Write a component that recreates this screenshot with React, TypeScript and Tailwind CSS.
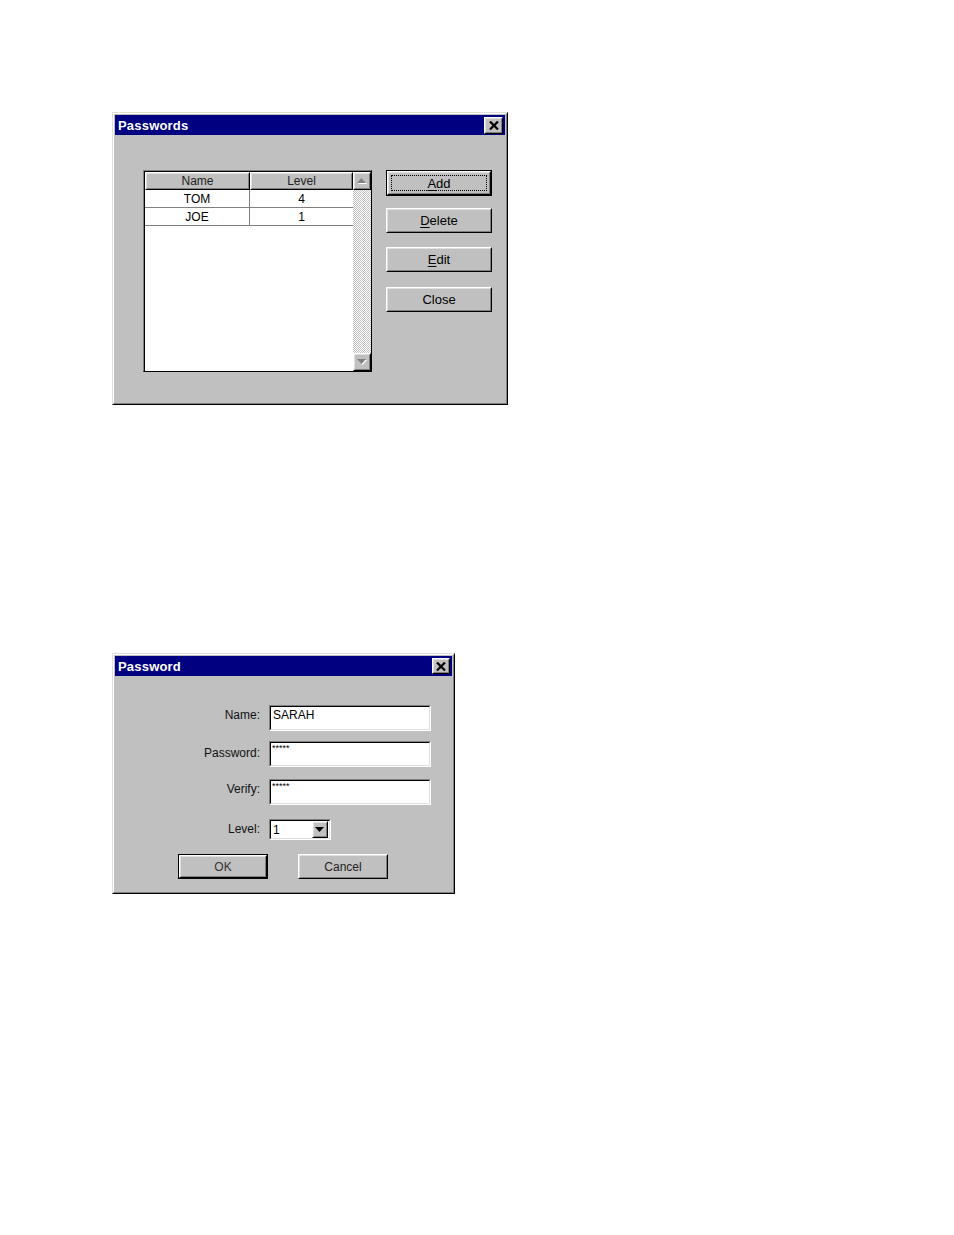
import type { ReactNode } from "react";

const font = "font-['Liberation_Sans',Arial,sans-serif]";

function Raised({
  className = "",
  innerClassName = "",
  children,
}: {
  className?: string;
  innerClassName?: string;
  children?: ReactNode;
}) {
  return (
    <div
      className={`border border-t-white border-l-white border-r-black border-b-black bg-[#c0c0c0] ${className}`}
    >
      <div
        className={`h-full w-full border border-t-[#dfdfdf] border-l-[#dfdfdf] border-r-[#808080] border-b-[#808080] ${innerClassName}`}
      >
        {children}
      </div>
    </div>
  );
}

function Sunken({
  className = "",
  innerClassName = "",
  children,
}: {
  className?: string;
  innerClassName?: string;
  children?: ReactNode;
}) {
  return (
    <div
      className={`border border-t-[#808080] border-l-[#808080] border-r-white border-b-white ${className}`}
    >
      <div
        className={`h-full w-full border border-t-black border-l-black border-r-[#dfdfdf] border-b-[#dfdfdf] bg-white ${innerClassName}`}
      >
        {children}
      </div>
    </div>
  );
}

function CloseButton({ className = "" }: { className?: string }) {
  return (
    <Raised className={className} innerClassName="flex items-center justify-center">
      <svg width="10" height="9" viewBox="0 0 10 9">
        <path d="M1 0.5 L9 8.5 M9 0.5 L1 8.5" stroke="black" strokeWidth={2.2} />
      </svg>
    </Raised>
  );
}

function TitleBar({ title, closeClass }: { title: string; closeClass: string }) {
  return (
    <div className="flex h-[20px] shrink-0 items-center justify-between bg-[#000080] pl-[3px] pr-[2px]">
      <span className="text-[13px] font-bold leading-none tracking-[0.2px] text-white">
        {title}
      </span>
      <CloseButton className={closeClass} />
    </div>
  );
}

function Window({
  title,
  className,
  closeClass,
  children,
}: {
  title: string;
  className: string;
  closeClass: string;
  children: ReactNode;
}) {
  return (
    <div
      className={`border border-t-[#dfdfdf] border-l-[#dfdfdf] border-r-black border-b-black ${className}`}
    >
      <div className="flex h-full flex-col border border-t-white border-l-white border-r-[#808080] border-b-[#808080] bg-[#c0c0c0] p-[1px]">
        <TitleBar title={title} closeClass={closeClass} />
        {children}
      </div>
    </div>
  );
}

function PushButton({
  children,
  isDefault,
  focused,
  className = "",
  textClass = "text-[13px]",
}: {
  children: ReactNode;
  isDefault?: boolean;
  focused?: boolean;
  className?: string;
  textClass?: string;
}) {
  const body = (
    <Raised
      className="h-full w-full"
      innerClassName={`flex items-center justify-center ${focused ? "p-[2px]" : ""}`}
    >
      {focused ? (
        <div className={`flex h-full w-full items-center justify-center border border-dotted border-black leading-none ${textClass}`}>
          {children}
        </div>
      ) : (
        <span className={`leading-none ${textClass}`}>{children}</span>
      )}
    </Raised>
  );
  if (isDefault) {
    return <div className={`border border-black ${className}`}>{body}</div>;
  }
  return <div className={className}>{body}</div>;
}

function Arrow({ dir, disabled }: { dir: "up" | "down"; disabled?: boolean }) {
  const pts = dir === "up" ? "4.5,0 9,5 0,5" : "0,0 9,0 4.5,5";
  return (
    <svg width="10" height="6" viewBox="0 0 10 6">
      {disabled && <polygon points={pts} fill="white" transform="translate(1,1)" />}
      <polygon points={pts} fill={disabled ? "#808080" : "black"} />
    </svg>
  );
}

const users = [
  { name: "TOM", level: 4 },
  { name: "JOE", level: 1 },
];

function UserList() {
  return (
    <div className="h-[202px] w-[229px] border border-t-[#808080] border-l-[#808080] border-r-black border-b-black">
      <div className="flex h-full border-t border-l border-t-black border-l-black bg-white">
        <div className="flex-1">
          <div className="flex h-[18px]">
            <Raised className="w-[105px]" innerClassName="flex items-center justify-center">
              <span className="text-[12px] leading-none text-[#222]">Name</span>
            </Raised>
            <Raised className="flex-1" innerClassName="flex items-center justify-center">
              <span className="text-[12px] leading-none text-[#222]">Level</span>
            </Raised>
          </div>
          {users.map((u) => (
            <div key={u.name} className="flex h-[18px] border-b border-[#808080]">
              <div className="flex w-[105px] items-center justify-center border-r border-[#808080] text-[12px] leading-none">
                {u.name}
              </div>
              <div className="flex flex-1 items-center justify-center text-[12px] leading-none">
                {u.level}
              </div>
            </div>
          ))}
        </div>
        <div className="flex w-[18px] flex-col">
          <Raised className="h-[18px] w-[18px]" innerClassName="flex items-center justify-center">
            <Arrow dir="up" disabled />
          </Raised>
          <div className="flex-1 bg-[image:repeating-conic-gradient(#c0c0c0_0_25%,#ffffff_0_50%)] bg-[length:2px_2px]" />
          <Raised className="h-[18px] w-[18px]" innerClassName="flex items-center justify-center">
            <Arrow dir="down" disabled />
          </Raised>
        </div>
      </div>
    </div>
  );
}

function PasswordsDialog() {
  return (
    <Window title="Passwords" className="h-[293px] w-[396px]" closeClass="h-[17px] w-[19px]">
      <div className="flex pl-[28px] pt-[35px]">
        <UserList />
        <div className="ml-[14px] flex w-[106px] flex-col">
          <PushButton isDefault focused className="h-[26px]">
            <span className="underline underline-offset-2">A</span>dd
          </PushButton>
          <PushButton className="mt-[12px] h-[25px]">
            <span className="underline underline-offset-2">D</span>elete
          </PushButton>
          <PushButton className="mt-[14px] h-[25px]">
            <span className="underline underline-offset-2">E</span>dit
          </PushButton>
          <PushButton className="mt-[15px] h-[25px]">Close</PushButton>
        </div>
      </div>
    </Window>
  );
}

function FieldRow({
  label,
  labelPad,
  className = "",
  children,
}: {
  label: string;
  labelPad: string;
  className?: string;
  children: ReactNode;
}) {
  return (
    <div className={`flex items-start ${className}`}>
      <div className={`w-[145px] text-right text-[12px] leading-[14px] text-[#111] ${labelPad}`}>
        {label}
      </div>
      <div className="ml-[9px]">{children}</div>
    </div>
  );
}

function PasswordDialog() {
  return (
    <Window title="Password" className="mt-[248px] h-[241px] w-[343px]" closeClass="h-[16px] w-[18px]">
      <div className="flex flex-col pt-[29px]">
        <FieldRow label="Name:" labelPad="pt-[3px]">
          <Sunken className="h-[26px] w-[162px]" innerClassName="pl-[2px] pt-[1px]">
            <span className="block text-[12px] leading-[14px]">SARAH</span>
          </Sunken>
        </FieldRow>
        <FieldRow label="Password:" labelPad="pt-[5px]" className="mt-[10px]">
          <Sunken className="h-[26px] w-[162px]" innerClassName="pl-[1px] pt-[1px]">
            <span className="block text-[9px] leading-none">*****</span>
          </Sunken>
        </FieldRow>
        <FieldRow label="Verify:" labelPad="pt-[3px]" className="mt-[12px]">
          <Sunken className="h-[26px] w-[162px]" innerClassName="pl-[1px] pt-[1px]">
            <span className="block text-[9px] leading-none">*****</span>
          </Sunken>
        </FieldRow>
        <FieldRow label="Level:" labelPad="pt-[3px]" className="mt-[14px]">
          <Sunken className="h-[21px] w-[62px]" innerClassName="flex items-center justify-between pl-[2px] pr-[1px]">
            <span className="text-[12px] leading-none">1</span>
            <Raised className="h-[17px] w-[16px]" innerClassName="flex items-center justify-center">
              <Arrow dir="down" />
            </Raised>
          </Sunken>
        </FieldRow>
        <div className="mt-[14px] flex pl-[63px]">
          <PushButton isDefault className="h-[25px] w-[90px]" textClass="text-[12px] text-[#333]">
            OK
          </PushButton>
          <PushButton className="ml-[30px] h-[25px] w-[90px]" textClass="text-[12px] text-[#222]">
            Cancel
          </PushButton>
        </div>
      </div>
    </Window>
  );
}

export default function App() {
  return (
    <div className={`min-h-[1235px] w-[954px] bg-white pl-[112px] pt-[112px] text-black ${font}`}>
      <PasswordsDialog />
      <PasswordDialog />
    </div>
  );
}
